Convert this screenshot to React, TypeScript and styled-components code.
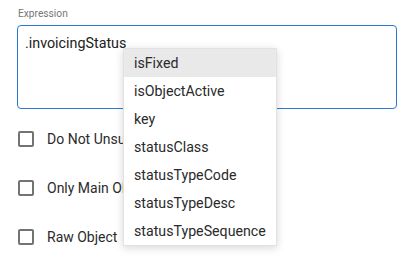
import * as React from 'react';
import styled, { createGlobalStyle } from 'styled-components';

const GlobalStyles = createGlobalStyle`
  body {
    margin: 0;
    background: #fff;
    font-family: Roboto, "Liberation Sans", sans-serif;
    color: #212121;
  }
`;

const Page = styled.div`
  position: relative;
  width: 408px;
  height: 274px;
  padding: 0 11px 0 17px;
  box-sizing: border-box;
`;

const Label = styled.div`
  padding: 8px 0 0 1px;
  height: 25px;
  box-sizing: border-box;
  font-size: 10.2px;
  color: #767676;
`;

const Field = styled.div`
  height: 84px;
  border: 1px solid #2a7ad3;
  border-radius: 4px;
  box-sizing: border-box;
  padding: 9px 7px;
  font-size: 14.3px;
  line-height: 16px;
  color: #202020;
`;

const Options = styled.div`
  display: flex;
  flex-direction: column;
  padding-top: 22px;
  gap: 33px;
`;

const Row = styled.label`
  display: flex;
  align-items: center;
  gap: 13px;
  height: 16px;
  padding-left: 1px;
  font-size: 14px;
  color: #2b2b2b;
`;

const Box = styled.span`
  width: 16px;
  height: 16px;
  box-sizing: border-box;
  border: 2px solid #737373;
  border-radius: 2px;
`;

const Menu = styled.ul`
  position: absolute;
  left: 123px;
  top: 48px;
  width: 152px;
  margin: 0;
  padding: 0;
  list-style: none;
  background: #fff;
  border: 1px solid #e2e2e2;
  box-shadow: 0 2px 8px rgba(0, 0, 0, 0.16);
`;

const Item = styled.li<{ $active?: boolean }>`
  height: 28px;
  display: flex;
  align-items: center;
  padding: 0 10px;
  font-size: 14.2px;
  color: #2a2a2a;
  background: ${p => (p.$active ? '#e9e9e9' : 'transparent')};
`;

const suggestions = [
  'isFixed',
  'isObjectActive',
  'key',
  'statusClass',
  'statusTypeCode',
  'statusTypeDesc',
  'statusTypeSequence',
];

const options = ['Do Not Unsubscribe', 'Only Main Object', 'Raw Object'];

const App: React.FC = () => (
  <>
    <GlobalStyles />
    <Page>
      <Label>Expression</Label>
      <Field>.invoicingStatus</Field>
      <Options>
        {options.map(o => (
          <Row key={o}>
            <Box />
            {o}
          </Row>
        ))}
      </Options>
      <Menu>
        {suggestions.map((s, i) => (
          <Item key={s} $active={i === 0}>
            {s}
          </Item>
        ))}
      </Menu>
    </Page>
  </>
);

export default App;
